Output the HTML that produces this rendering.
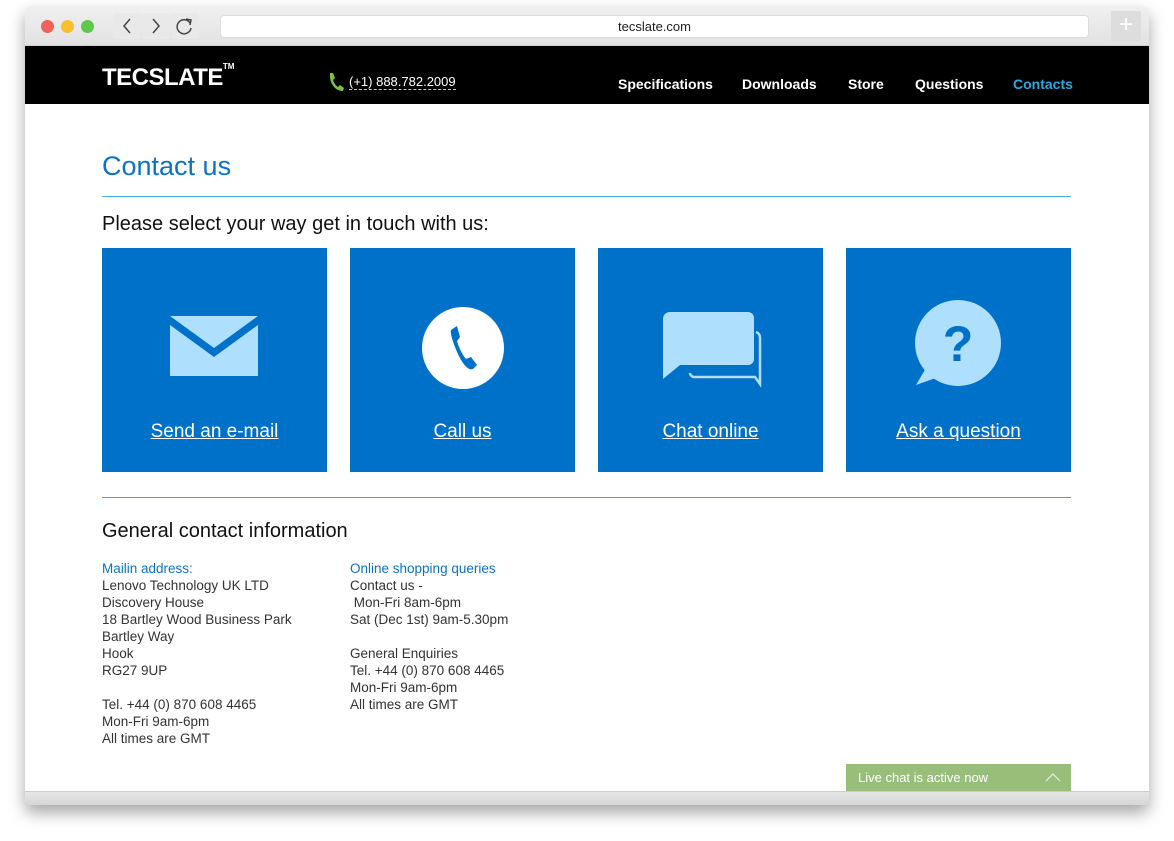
<!DOCTYPE html>
<html><head><meta charset="utf-8"><style>
*{margin:0;padding:0;box-sizing:border-box}
body{width:1174px;height:841px;background:#fff;font-family:"Liberation Sans",sans-serif;position:relative;overflow:hidden}
.win{position:absolute;left:25px;top:6px;width:1124px;height:799px;border-radius:6px;background:#fff;box-shadow:0 8px 16px rgba(0,0,0,.35);overflow:hidden}
.tb{position:absolute;left:0;top:0;width:100%;height:40px;background:linear-gradient(#f0f0f0,#e2e2e2);border-bottom:1px solid #cfcfcf}
.dot{position:absolute;top:14px;width:13px;height:13px;border-radius:50%}
.btn{position:absolute;top:7px;width:28px;height:26px;background:#e9e9e9;border-radius:3px}
.url{position:absolute;left:195px;top:9px;width:869px;height:23px;background:#fff;border-radius:4px;border:1px solid #ddd;text-align:center;font-size:13px;line-height:21px;color:#222}
.nav{position:absolute;left:0;top:40px;width:100%;height:58px;background:#000}
.logo{position:absolute;left:77px;top:18px;color:#fff;font-weight:bold;font-size:24px;letter-spacing:-0.5px}
.logo sup{font-size:8px;position:relative;top:-7px;letter-spacing:0}
.ph{position:absolute;left:324px;top:28px;color:#fff;font-size:13px;border-bottom:1px dashed #ccc;line-height:15px}
.menu{position:absolute;top:30px;color:#fff;font-weight:bold;font-size:14px}
.bot{position:absolute;left:0;bottom:0;width:100%;height:14px;background:linear-gradient(#e6e6e6,#d6d6d6);border-top:1px solid #ccc}
h1{position:absolute;left:77px;top:145px;font-weight:normal;font-size:27px;color:#0a73c8}
.hr{position:absolute;left:77px;width:969px;height:1px;background:#4fb3e8}
.sub{position:absolute;left:77px;font-size:20px;color:#111}
.tile{position:absolute;top:242px;width:225px;height:224px;background:#0071c9;text-align:center}
.tile a{position:absolute;left:0;width:100%;top:173px;color:#fff;font-size:19px;text-decoration:underline}
.tile svg{position:absolute;left:0;top:0}
.col{position:absolute;top:554px;font-size:13.5px;line-height:17px;color:#333}
.col .b{color:#0a73c8}
.chat{position:absolute;left:821px;top:758px;width:225px;height:27px;background:#97bf7a;color:#fff;font-size:13px;line-height:27px;padding-left:12px}
</style></head><body>
<div class="win">
<div class="tb">
<div class="dot" style="left:16px;background:#f2605a"></div>
<div class="dot" style="left:36px;background:#f8c02e"></div>
<div class="dot" style="left:56px;background:#5fc84c"></div>
<div class="btn" style="left:88px"><svg width="28" height="26"><path d="M17 6l-6 7 6 7" fill="none" stroke="#444" stroke-width="1.5"/></svg></div>
<div class="btn" style="left:117px"><svg width="28" height="26"><path d="M11 6l6 7-6 7" fill="none" stroke="#444" stroke-width="1.5"/></svg></div>
<div class="btn" style="left:146px"><svg width="28" height="26"><path d="M19 10a7 7 0 1 0 1 5" fill="none" stroke="#444" stroke-width="1.5"/><path d="M15 6l5 1-1 5" fill="none" stroke="#444" stroke-width="1.5"/></svg></div>
<div class="url">tecslate.com</div>
<div style="position:absolute;right:8px;top:5px;width:30px;height:30px;background:#ddd;color:#fff;font-size:24px;text-align:center;line-height:28px">+</div>
</div>
<div class="nav">
<div class="logo">TECSLATE<sup>TM</sup></div>
<svg style="position:absolute;left:302px;top:26px" width="18" height="20" viewBox="0 0 18 20"><path d="M3 1l3 0 2 5-2 2c1 3 3 6 5 7l2-2 4 3-1 3c-8 0-14-8-13-18z" fill="#7ac143"/></svg>
<div class="ph">(+1) 888.782.2009</div>
<div class="menu" style="left:593px">Specifications</div>
<div class="menu" style="left:717px">Downloads</div>
<div class="menu" style="left:823px">Store</div>
<div class="menu" style="left:890px">Questions</div>
<div class="menu" style="left:988px;color:#2ba8e0">Contacts</div>
</div>
<h1>Contact us</h1>
<div class="hr" style="top:190px"></div>
<div class="sub" style="top:207px">Please select your way get in touch with us:</div>
<div class="tile" style="left:77px"><svg width="225" height="160"><path d="M68 68h88l-44 32z" fill="#aee0fd"/><path d="M68 77l44 32 44-32v51h-88z" fill="#aee0fd"/></svg><a>Send an e-mail</a></div>
<div class="tile" style="left:325px"><svg width="225" height="160"><circle cx="113" cy="100" r="41" fill="#fff"/><path d="M101 82l6-4 3 11-3 4c2 7 5 13 9 18l5-2 6 8-4 4c-4 2-10-4-15-15-5-11-8-21-7-24z" fill="#0071c9"/></svg><a>Call us</a></div>
<div class="tile" style="left:573px"><svg width="225" height="160"><path d="M72 64h78a6 6 0 0 1 6 6v41a6 6 0 0 1-6 6H82l-17 14V70a7 7 0 0 1 7-6z" fill="#aee0fd"/><path d="M158 84c3 1 4 3 4 6v46l-5-7H96c-2 0-4-2-4-4" fill="none" stroke="#aee0fd" stroke-width="2.5"/></svg><a>Chat online</a></div>
<div class="tile" style="left:821px"><svg width="225" height="160"><circle cx="112" cy="95" r="43" fill="#aee0fd"/><path d="M80 120l-10 17 28-10z" fill="#aee0fd"/><text x="112" y="113" text-anchor="middle" font-family="Liberation Sans" font-weight="bold" font-size="50" fill="#0071c9">?</text></svg><a>Ask a question</a></div>
<div class="hr" style="top:491px;background:#5b9bd0"></div>
<div class="sub" style="top:514px">General contact information</div>
<div class="col" style="left:77px"><span class="b">Mailin address:</span><br>Lenovo Technology UK LTD<br>Discovery House<br>18 Bartley Wood Business Park<br>Bartley Way<br>Hook<br>RG27 9UP<br><br>Tel. +44 (0) 870 608 4465<br>Mon-Fri 9am-6pm<br>All times are GMT</div>
<div class="col" style="left:325px"><span class="b">Online shopping queries</span><br>Contact us -<br>&nbsp;Mon-Fri 8am-6pm<br>Sat (Dec 1st) 9am-5.30pm<br><br>General Enquiries<br>Tel. +44 (0) 870 608 4465<br>Mon-Fri 9am-6pm<br>All times are GMT</div>
<div class="chat">Live chat is active now<svg style="position:absolute;right:10px;top:9px" width="16" height="9"><path d="M1 8l7-7 7 7" fill="none" stroke="#e6f0dc" stroke-width="1.2"/></svg></div>
<div class="bot"></div>
</div>
</body></html>
